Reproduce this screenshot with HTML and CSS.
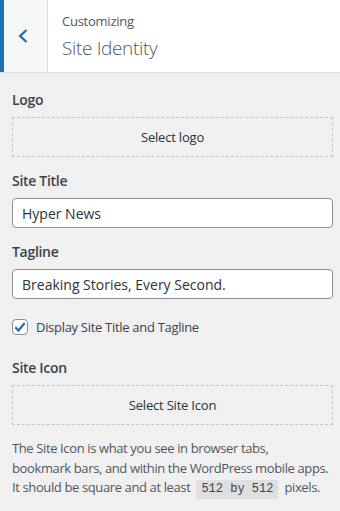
FILE: index.html
```html
<!DOCTYPE html>
<html>
<head>
<meta charset="utf-8">
<link rel="stylesheet" href="styles.css">
</head>
<body>
<div class="panel">
  <div class="header">
    <button class="back" aria-label="Back">
      <svg width="14" height="16" viewBox="0 0 14 16"><polyline points="10.5,2 4.2,8 10.5,14" fill="none" stroke="#2271b1" stroke-width="2.4" stroke-linejoin="miter"/></svg>
    </button>
    <div class="titles">
      <div class="crumb">Customizing</div>
      <div class="title">Site Identity</div>
    </div>
  </div>
  <div class="content">
    <div class="control">
      <div class="label">Logo</div>
      <div class="upload">Select logo</div>
    </div>
    <div class="control">
      <div class="label">Site Title</div>
      <div class="input">Hyper News</div>
    </div>
    <div class="control">
      <div class="label">Tagline</div>
      <div class="input">Breaking Stories, Every Second.</div>
    </div>
    <div class="control check-row">
      <span class="checkbox"><svg width="14" height="14" viewBox="0 0 14 14"><polyline points="2.3,7.3 5.5,10.5 11.7,3" fill="none" stroke="#2271b1" stroke-width="2.3"/></svg></span>
      <span class="check-label">Display Site Title and Tagline</span>
    </div>
    <div class="control icon-control">
      <div class="label">Site Icon</div>
      <div class="upload">Select Site Icon</div>
      <p class="desc">The Site Icon is what you see in browser tabs,<br>bookmark bars, and within the WordPress mobile apps.<br>It should be square and at least <code>512 by 512</code> pixels.</p>
    </div>
  </div>
</div>
</body>
</html>
```

FILE: styles.css
```css
html, body {
  margin: 0;
  padding: 0;
}
body {
  background: #f0f0f1;
  font-family: "Segoe UI", "Open Sans", sans-serif;
  color: #3c434a;
  font-size: 13px;
}
.panel {
  width: 340px;
  height: 511px;
  overflow: hidden;
  background: #f0f0f1;
}
.header {
  display: flex;
  height: 72px;
  background: #fff;
  border-bottom: 1px solid #dcdcde;
}
.back {
  width: 48px;
  height: 72px;
  box-sizing: border-box;
  border: 0;
  border-left: 4px solid #2271b1;
  border-right: 1px solid #dcdcde;
  background: #f6f7f7;
  padding: 0 0 0 12px;
  display: flex;
  align-items: center;
  margin: 0;
}
.titles {
  padding-left: 14px;
  padding-top: 11px;
  color: #50575e;
}
.crumb {
  font-size: 13px;
  line-height: 20px;
  letter-spacing: -0.25px;
}
.title {
  font-size: 19px;
  font-weight: 300;
  line-height: 30px;
  margin-top: 2px;
  letter-spacing: -0.35px;
}
.content {
  padding: 15px 7px 0 12px;
}
.control {
  margin-bottom: 12px;
}
.label {
  font-size: 14px;
  font-weight: 600;
  line-height: 24px;
  margin-bottom: 5px;
  color: #3c434a;
  letter-spacing: -0.3px;
}
.upload {
  box-sizing: border-box;
  height: 40px;
  border: 1px dashed #c3c4c7;
  display: flex;
  align-items: center;
  justify-content: center;
  font-size: 13px;
  color: #2c3338;
  letter-spacing: -0.2px;
}
.input {
  box-sizing: border-box;
  height: 30px;
  border: 1px solid #8c8f94;
  border-radius: 4px;
  background: #fff;
  padding: 0 9px;
  display: flex;
  align-items: center;
  font-size: 14px;
  color: #2c3338;
}
.check-row {
  display: flex;
  align-items: center;
  gap: 8px;
  padding-top: 8px;
  height: 16px;
}
.checkbox {
  box-sizing: border-box;
  width: 16px;
  height: 16px;
  border: 1px solid #8c8f94;
  border-radius: 4px;
  background: #fff;
  display: flex;
  align-items: center;
  justify-content: center;
}
.check-label {
  font-size: 13px;
  color: #3c434a;
  letter-spacing: -0.3px;
}
.icon-control {
  margin-top: 21px;
}
.desc {
  margin: 14px 0 0;
  line-height: 19.5px;
  font-size: 13px;
  color: #50575e;
  letter-spacing: -0.38px;
  white-space: nowrap;
}
code {
  display: inline-block;
  font-family: "Liberation Mono", monospace;
  font-size: 12px;
  line-height: 13px;
  letter-spacing: 0;
  background: rgba(0, 0, 0, 0.07);
  padding: 3px 5px 3px;
  margin: 0 3px;
  color: #3c434a;
}
```
